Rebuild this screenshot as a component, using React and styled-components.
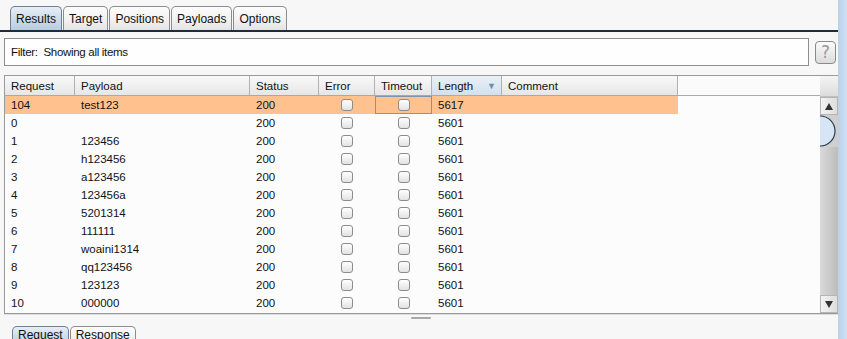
import React from "react";
import styled, { createGlobalStyle } from "styled-components";

const Global = createGlobalStyle`
  html, body { margin: 0; padding: 0; background: #f7f7f7; }
  body { font-family: "Liberation Sans", Arial, sans-serif; font-size: 12px; color: #111; overflow: hidden; }
`;

const Frame = styled.div`
  display: flex;
  width: 847px;
  height: 339px;
  overflow: hidden;
`;

const Main = styled.div`
  width: 838px;
  display: flex;
  flex-direction: column;
  background: #f7f7f7;
`;

const EdgeStrip = styled.div`
  width: 9px;
  background: linear-gradient(90deg, #b9d1ea, #cfe0f3);
`;

const TabBar = styled.div`
  height: 32px;
  flex-shrink: 0;
  box-sizing: border-box;
  padding-left: 10px;
  display: flex;
  align-items: flex-end;
  border-bottom: 2px solid #1d2d40;
`;

const Tab = styled.div`
  height: ${(p) => p.$h || 24}px;
  flex-shrink: 0;
  box-sizing: border-box;
  padding: 0 5px;
  padding-bottom: ${(p) => p.$pb || 0}px;
  display: flex;
  align-items: center;
  font-size: 12px;
  color: #111;
  border: 1px solid ${(p) => (p.$active ? "#6d7f91" : "#8c8c8c")};
  border-bottom: none;
  border-radius: 5px 5px 0 0;
  margin-right: 1px;
  background: ${(p) =>
    p.$active
      ? "linear-gradient(180deg, #e6eef6 0%, #c9d9e8 60%, #b8cde0 100%)"
      : "linear-gradient(180deg, #fdfdfd 0%, #f0f0f0 60%, #e4e4e4 100%)"};
`;

const FilterRow = styled.div`
  display: flex;
  align-items: center;
  margin: 6px 0 0 4px;
  gap: 6px;
  flex-shrink: 0;
`;

const FilterBox = styled.div`
  width: 805px;
  height: 28px;
  box-sizing: border-box;
  border: 1px solid #8e8e8e;
  background: #fefefe;
  display: flex;
  align-items: center;
  padding-left: 6px;
  font-size: 11.5px;
  letter-spacing: -0.3px;
`;

const HelpButton = styled.div`
  width: 21px;
  height: 23px;
  box-sizing: border-box;
  border: 1px solid #8a8a8a;
  border-radius: 4px;
  background: linear-gradient(180deg, #fafafa, #dcdcdc);
  display: flex;
  align-items: center;
  justify-content: center;
  font-family: "DejaVu Sans", sans-serif;
  font-size: 17px;
  color: #9a9a9a;
`;

const TableWrap = styled.div`
  margin: 9px 0 0 4px;
  width: 834px;
  height: 239px;
  flex-shrink: 0;
  box-sizing: border-box;
  border: 1px solid #9a9a9a;
  border-right: none;
  background: #fcfcfc;
  display: flex;
`;

const Grid = styled.div`
  flex: 1;
  display: flex;
  flex-direction: column;
`;

const HeaderRow = styled.div`
  display: flex;
  height: 20px;
  box-sizing: border-box;
  border-bottom: 1px solid #a9a9a9;
  background: #fbfbfb;
`;

const HeadCell = styled.div`
  width: ${(p) => p.$w}px;
  box-sizing: border-box;
  padding-left: 6px;
  display: flex;
  align-items: center;
  justify-content: space-between;
  border-right: 1px solid #b0b0b0;
  background: ${(p) =>
    p.$sorted
      ? "linear-gradient(180deg, #e9f0f7 0%, #d3e0ed 100%)"
      : "linear-gradient(180deg, #f9f9f9 0%, #e6e6e6 100%)"};
  font-size: 11.5px;
`;

const SortArrow = styled.span`
  color: #6e8fb2;
  font-size: 9px;
  margin-right: 5px;
`;

const Row = styled.div`
  display: flex;
  height: 18px;
  width: 673px;
  background: ${(p) => (p.$selected ? "#ffc28f" : "transparent")};
`;

const Cell = styled.div`
  width: ${(p) => p.$w}px;
  box-sizing: border-box;
  padding-left: ${(p) => (p.$center ? 0 : 6)}px;
  display: flex;
  align-items: center;
  justify-content: ${(p) => (p.$center ? "center" : "flex-start")};
  font-size: 11.5px;
  border: ${(p) => (p.$focus ? "1px solid #7c95b0" : "none")};
`;

const Check = styled.span`
  width: 10px;
  height: 10px;
  border: 1px solid #8c8c8c;
  border-radius: 3px;
  background: linear-gradient(180deg, #ffffff, #e2e2e2);
`;

const ScrollBar = styled.div`
  width: 18px;
  display: flex;
  flex-direction: column;
  background: linear-gradient(90deg, #d9d9d9 0%, #cbcbcb 50%, #bcbcbc 100%);
`;

const ScrollCorner = styled.div`
  height: 20px;
  background: linear-gradient(180deg, #f4f4f4, #dcdcdc);
  border-bottom: 1px solid #c0c0c0;
`;

const ScrollBtn = styled.div`
  height: 18px;
  box-sizing: border-box;
  border: 1px solid #b5b5b5;
  background: linear-gradient(90deg, #f4f4f4, #dddddd);
  display: flex;
  align-items: center;
  justify-content: center;
`;

const Thumb = styled.svg`
  display: block;
  width: 18px;
  height: 32px;
`;

const Track = styled.div`
  flex: 1;
`;

const Splitter = styled.div`
  height: 9px;
  flex-shrink: 0;
  display: flex;
  align-items: center;
  justify-content: center;
  border-top: 1px solid #dedede;
  margin-left: 4px;
`;

const Grip = styled.div`
  width: 20px;
  height: 2px;
  margin-top: -3px;
  background: #a8a8a8;
  border-radius: 1px;
`;

const BottomTabs = styled.div`
  display: flex;
  align-items: flex-start;
  padding-left: 12px;
  margin-top: 2px;
`;

const cols = [
  { key: "req", label: "Request", w: 70 },
  { key: "pay", label: "Payload", w: 175 },
  { key: "status", label: "Status", w: 69 },
  { key: "err", label: "Error", w: 56 },
  { key: "to", label: "Timeout", w: 57 },
  { key: "len", label: "Length", w: 70, sorted: true },
  { key: "com", label: "Comment", w: 176 },
];

const rows = [
  ["104", "test123", "5617"],
  ["0", "", "5601"],
  ["1", "123456", "5601"],
  ["2", "h123456", "5601"],
  ["3", "a123456", "5601"],
  ["4", "123456a", "5601"],
  ["5", "5201314", "5601"],
  ["6", "111111", "5601"],
  ["7", "woaini1314", "5601"],
  ["8", "qq123456", "5601"],
  ["9", "123123", "5601"],
  ["10", "000000", "5601"],
];

export default function App() {
  return (
    <>
      <Global />
      <Frame>
        <Main>
          <TabBar>
            <Tab $active>Results</Tab>
            <Tab>Target</Tab>
            <Tab>Positions</Tab>
            <Tab>Payloads</Tab>
            <Tab>Options</Tab>
          </TabBar>
          <FilterRow>
            <FilterBox>Filter:&nbsp; Showing all items</FilterBox>
            <HelpButton>?</HelpButton>
          </FilterRow>
          <TableWrap>
            <Grid>
              <HeaderRow>
                {cols.map((c) => (
                  <HeadCell key={c.key} $w={c.w} $sorted={c.sorted}>
                    {c.label}
                    {c.sorted && <SortArrow>▼</SortArrow>}
                  </HeadCell>
                ))}
              </HeaderRow>
              {rows.map((r, i) => (
                <Row key={r[0]} $selected={i === 0}>
                  <Cell $w={70}>{r[0]}</Cell>
                  <Cell $w={175}>{r[1]}</Cell>
                  <Cell $w={69}>200</Cell>
                  <Cell $w={56} $center>
                    <Check />
                  </Cell>
                  <Cell $w={57} $center $focus={i === 0}>
                    <Check />
                  </Cell>
                  <Cell $w={70}>{r[2]}</Cell>
                  <Cell $w={176} />
                </Row>
              ))}
            </Grid>
            <ScrollBar>
              <ScrollCorner />
              <ScrollBtn>
                <svg width="8" height="7" viewBox="0 0 8 7">
                  <path d="M4 0 L8 7 L0 7 Z" fill="#333" />
                </svg>
              </ScrollBtn>
              <Thumb viewBox="0 0 18 32">
                <rect x="0" y="0" width="18" height="32" fill="#cfcfcf" />
                <path d="M0 1 A15 15 0 0 1 0 31 Z" fill="#d6e6f6" />
                <path d="M0 1 A15 15 0 0 1 0 31" fill="none" stroke="#2c3a4a" strokeWidth="1.2" />
              </Thumb>
              <Track />
              <ScrollBtn>
                <svg width="8" height="7" viewBox="0 0 8 7">
                  <path d="M0 0 L8 0 L4 7 Z" fill="#333" />
                </svg>
              </ScrollBtn>
            </ScrollBar>
          </TableWrap>
          <Splitter>
            <Grip />
          </Splitter>
          <BottomTabs>
            <Tab $active $h={20} $pb={4}>Request</Tab>
            <Tab $h={20} $pb={4}>Response</Tab>
          </BottomTabs>
        </Main>
        <EdgeStrip />
      </Frame>
    </>
  );
}
